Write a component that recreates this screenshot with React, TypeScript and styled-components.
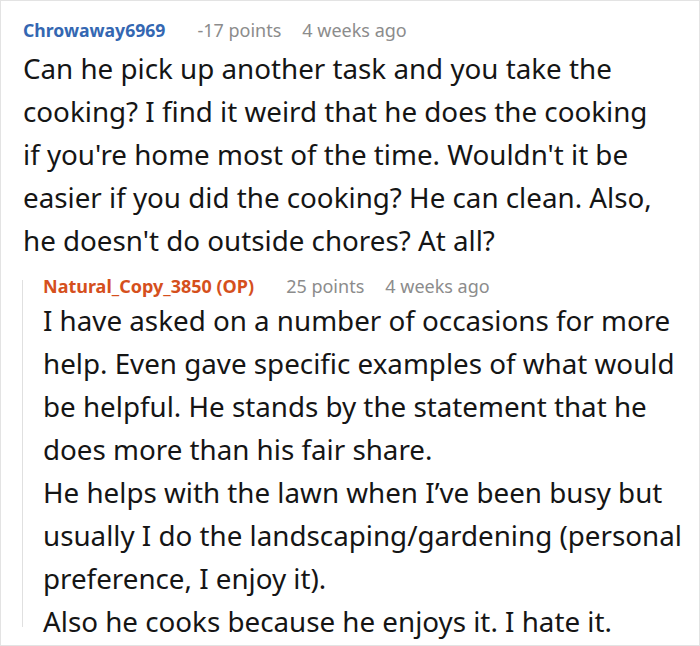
import styled, { createGlobalStyle } from 'styled-components';

const GlobalStyle = createGlobalStyle`
  html, body {
    margin: 0;
    padding: 0;
    background: #fff;
  }
  body {
    font-family: 'Noto Sans', 'Open Sans', sans-serif;
    color: #151515;
  }
`;

const Frame = styled.div`
  box-sizing: border-box;
  width: 700px;
  height: 646px;
  border: 1px solid #e3e3e3;
  padding: 17px 8px 0 22px;
  overflow: hidden;
`;

const Comment = styled.div`
  display: flex;
  flex-direction: column;
`;

const Reply = styled.div`
  margin: 18px 0 0 -1px;
  border-left: 1px solid #e0e0e0;
  padding-left: 20px;
  height: 347px;
`;

const Meta = styled.div<{ $tight?: boolean }>`
  display: flex;
  align-items: baseline;
  font-size: 18px;
  line-height: ${(p) => (p.$tight ? '12px' : '24px')};
  margin-bottom: ${(p) => (p.$tight ? '7px' : '5px')};
  color: #8c8c8c;
  white-space: nowrap;
`;

const Author = styled.span<{ $op?: boolean }>`
  font-weight: 700;
  font-size: ${(p) => (p.$op ? '18px' : '17.6px')};
  color: ${(p) => (p.$op ? '#d5501d' : '#3467b2')};
  margin-right: 32px;
`;

const Points = styled.span`
  color: #8c8c8c;
  margin-right: 21px;
`;

const Stamp = styled.span`
  color: #8c8c8c;
`;

const Body = styled.div<{ $inset?: number }>`
  font-size: 27.75px;
  line-height: 43px;
  color: #151515;
  padding-right: ${(p) => p.$inset ?? 0}px;
`;

const Para = styled.p`
  margin: 0;
`;

export default function App() {
  return (
    <>
      <GlobalStyle />
      <Frame>
        <Comment>
          <Meta>
            <Author>Chrowaway6969</Author>
            <Points>-17 points</Points>
            <Stamp>4 weeks ago</Stamp>
          </Meta>
          <Body $inset={28}>
            Can he pick up another task and you take the cooking? I find it weird that he does the cooking if
            you're home most of the time. Wouldn't it be easier if you did the cooking? He can clean. Also, he
            doesn't do outside chores? At all?
          </Body>
          <Reply>
            <Meta $tight>
              <Author $op>Natural_Copy_3850 (OP)</Author>
              <Points>25 points</Points>
              <Stamp>4 weeks ago</Stamp>
            </Meta>
            <Body>
              <Para>
                I have asked on a number of occasions for more help. Even gave specific examples of what would be
                helpful. He stands by the statement that he does more than his fair share.
              </Para>
              <Para>
                He helps with the lawn when I’ve been busy but usually I do the landscaping/gardening (personal
                preference, I enjoy it).
              </Para>
              <Para>Also he cooks because he enjoys it. I hate it.</Para>
            </Body>
          </Reply>
        </Comment>
      </Frame>
    </>
  );
}
